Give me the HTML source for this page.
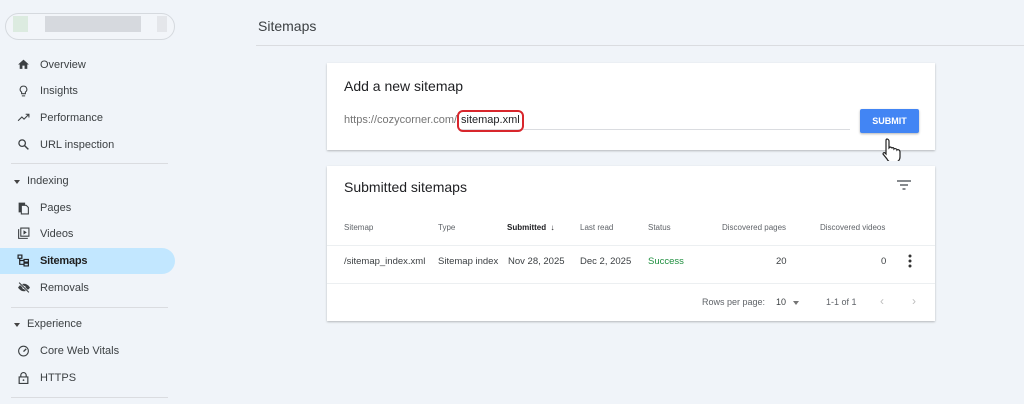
<!DOCTYPE html>
<html><head><meta charset="utf-8"><style>
*{box-sizing:border-box;margin:0;padding:0}
body{width:1024px;height:404px;background:#f0f4f9;font-family:"Liberation Sans",Arial,sans-serif;position:relative;overflow:hidden;color:#202124}
.a{position:absolute}
.pill{left:5px;top:13px;width:170px;height:27px;border:1px solid #d5d9de;border-radius:14px;background:#f2f5f9}
.blur{top:16px;height:16px;background:#d6d9de}
.it{position:absolute;left:0;width:175px;height:26px;font-size:11px;color:#3c4043;line-height:26px}
.it span{position:absolute;left:40px}
.it svg{position:absolute;left:17px;top:6px}
.hl{background:#c2e7ff;border-radius:0 13px 13px 0;color:#202124}
.hl span{font-weight:bold;color:#1f1f1f;letter-spacing:-0.2px}
.sec{position:absolute;left:27px;font-size:11px;color:#3c4043}
.sec:before{content:"";position:absolute;left:-13px;top:5px;border:3px solid transparent;border-top:4px solid #444}
.div{position:absolute;left:11px;width:157px;height:1px;background:#dadce0}
.card{position:absolute;left:327px;width:608px;background:#fff;box-shadow:0 1px 2px rgba(0,0,0,.25)}
.th{position:absolute;top:223px;font-size:8px;color:#5f6368}
.td{position:absolute;top:256px;font-size:9.5px;color:#3c4043}
</style></head><body>
<div class="a pill"></div>
<div class="a blur" style="left:13px;width:15px;background:#dcebe0"></div>
<div class="a blur" style="left:45px;width:96px"></div>
<div class="a blur" style="left:157px;width:10px;background:#e4e6ea"></div>

<div class="it" style="top:52px"><svg width="13" height="13" viewBox="0 0 24 24"><path d="M10 20v-6h4v6h5v-8h3L12 3 2 12h3v8z" fill="#3c4043"/></svg><span>Overview</span></div>
<div class="it" style="top:78px"><svg width="13" height="14" viewBox="0 0 24 24"><path d="M9 21h6M12 3a6 6 0 0 0-3.5 11V17h7v-3A6 6 0 0 0 12 3z" fill="none" stroke="#3c4043" stroke-width="2"/></svg><span>Insights</span></div>
<div class="it" style="top:105px"><svg width="13" height="13" viewBox="0 0 24 24"><path d="M2 18l7-7 4 4 8-8M16 6h6v6" fill="none" stroke="#3c4043" stroke-width="2"/></svg><span>Performance</span></div>
<div class="it" style="top:132px"><svg width="13" height="13" viewBox="0 0 24 24"><circle cx="9.5" cy="9.5" r="6" fill="none" stroke="#3c4043" stroke-width="2.4"/><path d="M14 14l7 7" stroke="#3c4043" stroke-width="2.6"/></svg><span>URL inspection</span></div>
<div class="div" style="top:163px"></div>
<div class="sec" style="top:175px">Indexing</div>
<div class="it" style="top:195px"><svg width="13" height="14" viewBox="0 0 24 24"><path d="M4 3h10v2H6v14H4zM8 7h9l4 4v12H8z" fill="none" stroke="#3c4043" stroke-width="2"/></svg><span>Pages</span></div>
<div class="it" style="top:221px"><svg width="13" height="13" viewBox="0 0 24 24"><path d="M3 4v17h17M7 2h15v15H7z" fill="none" stroke="#3c4043" stroke-width="2"/><path d="M12 6v8l6-4z" fill="#3c4043"/></svg><span>Videos</span></div>
<div class="it hl" style="top:248px"><svg width="13" height="13" viewBox="0 0 24 24"><path d="M2 2h7v6H2zM13 10h8v5h-8zM13 17h8v5h-8zM5 8v11h8M5 12h8" fill="none" stroke="#202124" stroke-width="2.2"/></svg><span>Sitemaps</span></div>
<div class="it" style="top:275px"><svg width="14" height="13" viewBox="0 0 24 24"><path d="M1 12s4-7 11-7 11 7 11 7-4 7-11 7S1 12 1 12z" fill="#3c4043"/><circle cx="12" cy="12" r="3" fill="#f0f4f9"/><path d="M3 3l18 18" stroke="#f0f4f9" stroke-width="4"/><path d="M3 3l18 18" stroke="#3c4043" stroke-width="2"/></svg><span>Removals</span></div>
<div class="div" style="top:307px"></div>
<div class="sec" style="top:318px">Experience</div>
<div class="it" style="top:338px"><svg width="13" height="13" viewBox="0 0 24 24"><circle cx="12" cy="13" r="9" fill="none" stroke="#3c4043" stroke-width="2"/><path d="M12 14l5-5" stroke="#3c4043" stroke-width="2.5"/></svg><span>Core Web Vitals</span></div>
<div class="it" style="top:365px"><svg width="13" height="14" viewBox="0 0 24 24"><path d="M7 10V7a5 5 0 0 1 10 0v3M4 10h16v12H4z" fill="none" stroke="#3c4043" stroke-width="2.2"/><circle cx="12" cy="16" r="1.6" fill="#3c4043"/></svg><span>HTTPS</span></div>
<div class="div" style="top:397px"></div>

<div class="a" style="left:258px;top:18px;font-size:14px;color:#3c4043">Sitemaps</div>
<div class="a" style="left:256px;top:45px;width:768px;height:1px;background:#dadce0"></div>

<div class="card" style="top:63px;height:87px"></div>
<div class="a" style="left:344px;top:78px;font-size:14px;color:#202124">Add a new sitemap</div>
<div class="a" style="left:344px;top:114px;font-size:11px;color:#757575">https://cozycorner.com/</div>
<div class="a" style="left:459px;top:129px;width:391px;height:1px;background:#dadce0"></div>
<div class="a" style="left:457px;top:110px;width:67px;height:22px;border:2px solid #d8262c;border-radius:6px"></div>
<div class="a" style="left:461px;top:114px;font-size:11px;color:#202124">sitemap.xml</div>
<div class="a" style="left:860px;top:109px;width:59px;height:24px;background:#4285f4;border-radius:2px;color:#fff;font-size:9px;font-weight:bold;text-align:center;line-height:24px;box-shadow:0 1px 2px rgba(0,0,0,.3)">SUBMIT</div>
<svg class="a" style="left:882px;top:137px" width="20" height="24" viewBox="0 0 20 24"><path d="M5 2c1 0 2 1 2 2v7l1-1c1 0 2 1 2 1 1-1 2 0 2 1 1-1 3 0 3 1 1-1 3 0 3 2v5c0 3-2 5-5 5H9c-2 0-3-1-4-3l-4-5c0-1 1-2 2-1l1 1V4c0-1 0-2 1-2z" fill="#fff" stroke="#222" stroke-width="1.2"/></svg>

<div class="card" style="top:166px;height:155px"></div>
<div class="a" style="left:344px;top:179px;font-size:14px;color:#202124">Submitted sitemaps</div>
<svg class="a" style="left:897px;top:180px" width="14" height="10" viewBox="0 0 14 10"><path d="M0 1h14M3 5h8M5.5 9h3" stroke="#5f6368" stroke-width="1.6"/></svg>
<div class="th" style="left:344px">Sitemap</div>
<div class="th" style="left:438px">Type</div>
<div class="th" style="left:507px;color:#202124;font-weight:bold">Submitted &nbsp;↓</div>
<div class="th" style="left:580px">Last read</div>
<div class="th" style="left:648px">Status</div>
<div class="th" style="left:722px">Discovered pages</div>
<div class="th" style="left:820px">Discovered videos</div>
<div class="a" style="left:327px;top:245px;width:608px;height:1px;background:#eceff1"></div>
<div class="td" style="left:344px">/sitemap_index.xml</div>
<div class="td" style="left:438px">Sitemap index</div>
<div class="td" style="left:508px">Nov 28, 2025</div>
<div class="td" style="left:580px">Dec 2, 2025</div>
<div class="td" style="left:648px;color:#1e8e3e">Success</div>
<div class="td" style="left:776px">20</div>
<div class="td" style="left:881px">0</div>
<svg class="a" style="left:908px;top:254px" width="4" height="14"><circle cx="2" cy="2" r="1.5" fill="#333"/><circle cx="2" cy="7" r="1.5" fill="#333"/><circle cx="2" cy="12" r="1.5" fill="#333"/></svg>
<div class="a" style="left:327px;top:283px;width:608px;height:1px;background:#eceff1"></div>
<div class="a" style="left:702px;top:297px;font-size:9px;color:#5f6368">Rows per page:</div>
<div class="a" style="left:776px;top:297px;font-size:9px;color:#3c4043">10</div>
<div class="a" style="left:793px;top:301px;border:3px solid transparent;border-top:4px solid #757575"></div>
<div class="a" style="left:826px;top:297px;font-size:9px;color:#5f6368">1-1 of 1</div>
<div class="a" style="left:880px;top:294px;font-size:12px;color:#bdbdbd">‹</div>
<div class="a" style="left:912px;top:294px;font-size:12px;color:#bdbdbd">›</div>
</body></html>
